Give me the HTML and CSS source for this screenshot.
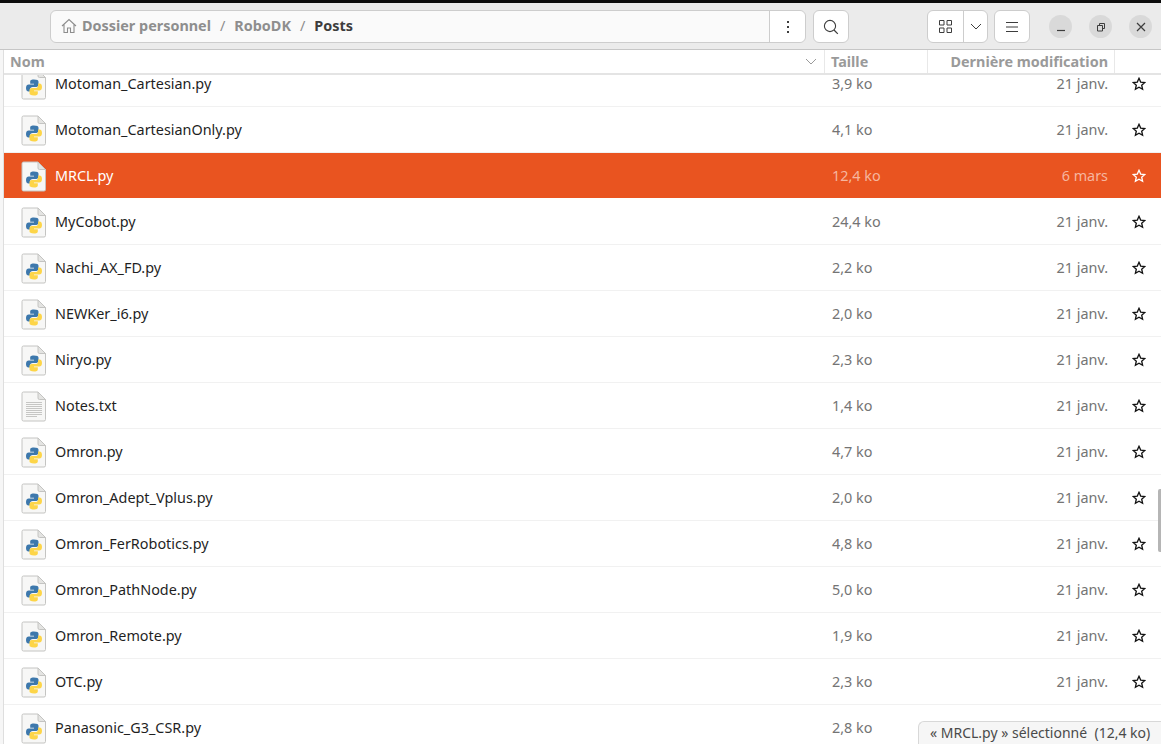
FILE: index.html
```html
<!DOCTYPE html>
<html lang="fr">
<head>
    <meta charset="UTF-8">
    <title>Posts</title>
    <link rel="stylesheet" href="styles.css">
</head>
<body>

<svg class="defs" width="0" height="0">
    <symbol id="sheet" viewBox="0 0 26 32">
        <path d="M2.500 2h14.500l7.500 7.500v20a1.500 1.500 0 0 1-1.500 1.500h-20.500a1.500 1.500 0 0 1-1.500-1.500v-26a1.500 1.500 0 0 1 1.500-1.500z" fill="#f7f7f6" stroke="#c4c4c2"/>
        <path d="M17 2v6a1.500 1.500 0 0 0 1.500 1.500h6z" fill="#e4e4e2" stroke="#c4c4c2"/>
    </symbol>
    <symbol id="py" viewBox="0 0 26 32">
        <use href="#sheet"/>
        <path d="M12.800 11.500c-3.400 0-3.600 1.300-3.600 2.200v2h3.800v.8h-5.300c-1.500 0-2.700 1.100-2.700 3.500s1.100 3.500 2.500 3.500h1.400v-1.900c0-1.500 1.200-2.700 2.800-2.700h3.600c1.200 0 2.200-1 2.200-2.200v-3c0-1.300-1.200-2.200-4.700-2.200z" fill="#3d78ac"/>
        <path d="M13.200 27.500c3.400 0 3.600-1.300 3.600-2.200v-2h-3.800v-.8h5.300c1.500 0 2.700-1.100 2.700-3.500s-1.100-3.500-2.500-3.500h-1.400v1.900c0 1.500-1.200 2.700-2.800 2.700h-3.600c-1.200 0-2.200 1-2.200 2.200v3c0 1.300 1.200 2.200 4.700 2.200z" fill="#fdd548"/>
    </symbol>
    <symbol id="txt" viewBox="0 0 26 32">
        <use href="#sheet"/>
        <path d="M5 12.500h16M5 14.500h16M5 16.500h16M5 18.500h16M5 20.500h16M5 22.500h16M5 24.500h16M5 26.500h11" stroke="#c6c6c4" fill="none"/>
    </symbol>
    <symbol id="star" viewBox="0 0 14 14">
        <path d="M7 1.300l1.700 3.800 4.100.4-3.100 2.700.9 4.100L7 10.200l-3.600 2.100.9-4.100-3.100-2.700 4.100-.4z" fill="none" stroke="currentColor" stroke-width="1.300"/>
    </symbol>
</svg>

<div class="top-edge"></div>

<header class="toolbar">
    <div class="pathbar">
        <div class="crumbs">
            <svg class="home-icon" width="16" height="16" viewBox="0 0 16 16"><path d="M1 8l7-6.500L15 8M3 6.500V14.500h3.500V10h3v4.500H13V6.500" fill="none" stroke="#8d8d8d" stroke-width="1.100"/></svg>
            <span class="crumb">Dossier personnel</span>
            <span class="sep">/</span>
            <span class="crumb">RoboDK</span>
            <span class="sep">/</span>
            <span class="crumb current">Posts</span>
        </div>
        <div class="path-menu">
            <svg width="4" height="12" viewBox="0 0 4 12"><path d="M1 0h2v2H1zM1 5h2v2H1zM1 10h2v2H1z" fill="#3d3d3d"/></svg>
        </div>
    </div>
    <button class="tool-btn search-btn">
        <svg width="16" height="16" viewBox="0 0 16 16"><circle cx="7" cy="7" r="5.600" fill="none" stroke="#3d3d3d" stroke-width="1.100"/><path d="M11 11l3.800 3.800" stroke="#3d3d3d" stroke-width="1.200"/></svg>
    </button>
    <div class="view-switch">
        <div class="view-grid">
            <svg width="13" height="13" viewBox="0 0 13 13"><path d="M.5.500h4.500v4.500H.5zM8 .500h4.500v4.500H8zM.5 8h4.500v4.500H.5zM8 8h4.500v4.500H8z" fill="none" stroke="#3d3d3d"/></svg>
        </div>
        <div class="view-drop">
            <svg width="12" height="7" viewBox="0 0 12 7"><path d="M1 1l5 5 5-5" fill="none" stroke="#3d3d3d"/></svg>
        </div>
    </div>
    <button class="tool-btn menu-btn">
        <svg width="12" height="10" viewBox="0 0 12 10"><path d="M0 .5h12M0 5h12M0 9.500h12" stroke="#3d3d3d"/></svg>
    </button>
    <div class="win-btns">
        <button class="win-btn"><svg width="10" height="10" viewBox="0 0 10 10"><path d="M1 8.500h8" stroke="#3d3d3d" stroke-width="1.200"/></svg></button>
        <button class="win-btn"><svg width="10" height="10" viewBox="0 0 10 10"><path d="M1.500 3.500h5v5.500h-5zM3.500 3.500v-2h5v5h-2" fill="none" stroke="#3d3d3d"/></svg></button>
        <button class="win-btn"><svg width="10" height="10" viewBox="0 0 10 10"><path d="M1 1l8 8M9 1l-8 8" stroke="#3d3d3d" stroke-width="1.200"/></svg></button>
    </div>
</header>

<main class="browser">
    <div class="sidebar-edge"></div>
    <section class="files">
        <div class="col-head">
            <div class="col col-name">Nom
                <svg width="12" height="7" viewBox="0 0 12 7"><path d="M1 1l5 5 5-5" fill="none" stroke="#9a9a9a"/></svg>
            </div>
            <div class="col col-size">Taille</div>
            <div class="col col-date">Dernière modification</div>
            <div class="col col-star"></div>
        </div>
        <div class="scroller">
            <div class="file-list" id="file-list"></div>
            <div class="scroll-thumb"></div>
            <div class="status">« MRCL.py » sélectionné  (12,4 ko)</div>
        </div>
    </section>
</main>

<script>
    // last row's date and star sit under the status label, so it has none
    const files = [
        ['Motoman_Cartesian.py', '3,9 ko', '21 janv.'],
        ['Motoman_CartesianOnly.py', '4,1 ko', '21 janv.'],
        ['MRCL.py', '12,4 ko', '6 mars'],
        ['MyCobot.py', '24,4 ko', '21 janv.'],
        ['Nachi_AX_FD.py', '2,2 ko', '21 janv.'],
        ['NEWKer_i6.py', '2,0 ko', '21 janv.'],
        ['Niryo.py', '2,3 ko', '21 janv.'],
        ['Notes.txt', '1,4 ko', '21 janv.'],
        ['Omron.py', '4,7 ko', '21 janv.'],
        ['Omron_Adept_Vplus.py', '2,0 ko', '21 janv.'],
        ['Omron_FerRobotics.py', '4,8 ko', '21 janv.'],
        ['Omron_PathNode.py', '5,0 ko', '21 janv.'],
        ['Omron_Remote.py', '1,9 ko', '21 janv.'],
        ['OTC.py', '2,3 ko', '21 janv.'],
        ['Panasonic_G3_CSR.py', '2,8 ko', '']
    ];

    const list = document.getElementById('file-list');
    files.forEach(file => {
        const row = document.createElement('div');
        row.classList.add('file-row');
        if (file[0] === 'MRCL.py') {
            row.classList.add('selected');
        }
        const icon = file[0].endsWith('.txt') ? 'txt' : 'py';
        row.innerHTML = `<svg class="file-icon"><use href="#${icon}"/></svg>
            <span class="file-name">${file[0]}</span>
            <span class="file-size">${file[1]}</span>
            <span class="file-date">${file[2]}</span>
            <span class="file-star"><svg width="14" height="14"><use href="#star"/></svg></span>`;
        list.appendChild(row);
    });
</script>
</body>
</html>
```

FILE: styles.css
```css
html, body {
    height: 100%;
}

body {
    margin: 0;
    height: 744px;
    overflow: hidden;
    display: flex;
    flex-direction: column;
    background-color: #fff;
    font-family: 'Noto Sans', sans-serif;
    font-size: 14.4px;
    color: #2a2a2a;
}

.defs {
    position: absolute;
}

.top-edge {
    height: 3px;
    flex: none;
    background-color: #0c0c0c;
}

.toolbar {
    height: 47px;
    flex: none;
    display: flex;
    align-items: center;
    padding: 1px 9px 0 50px;
    box-sizing: border-box;
    background-color: #ebebeb;
    border-bottom: 1px solid #c6c6c6;
}

.pathbar {
    width: 756px;
    height: 33px;
    display: flex;
    box-sizing: border-box;
    background-color: #fafafa;
    border: 1px solid #cdcdcd;
    border-radius: 6px;
}

.crumbs {
    flex: 1;
    display: flex;
    align-items: center;
    padding: 0 0 2px 10px;
    font-weight: 700;
    color: #8e8e8e;
}

.home-icon {
    margin-right: 5px;
}

.sep {
    margin: 0 9px;
    font-weight: 400;
}

.current {
    color: #3d3d3d;
}

.path-menu {
    width: 35px;
    display: flex;
    align-items: center;
    justify-content: center;
    background-color: #fff;
    border-left: 1px solid #cdcdcd;
    border-radius: 0 6px 6px 0;
}

.tool-btn, .view-switch {
    height: 33px;
    box-sizing: border-box;
    background-color: #fff;
    border: 1px solid #cdcdcd;
    border-radius: 6px;
}

.tool-btn {
    width: 36px;
    padding: 0;
    display: flex;
    align-items: center;
    justify-content: center;
}

.search-btn {
    margin-left: 7px;
}

.view-switch {
    width: 61px;
    margin-left: 78px;
    display: flex;
}

.view-grid {
    width: 35px;
    display: flex;
    align-items: center;
    justify-content: center;
    border-right: 1px solid #cdcdcd;
}

.view-drop {
    flex: 1;
    display: flex;
    align-items: center;
    justify-content: center;
}

.menu-btn {
    margin-left: 6px;
}

.win-btns {
    margin-left: 19px;
    display: flex;
    gap: 17px;
}

.win-btn {
    width: 23px;
    height: 23px;
    padding: 0;
    display: flex;
    align-items: center;
    justify-content: center;
    background-color: #d9d9d9;
    border: none;
    border-radius: 50%;
}

.browser {
    flex: 1;
    min-height: 0;
    display: flex;
}

.sidebar-edge {
    width: 3px;
    flex: none;
    background-color: #f6f6f6;
    border-right: 1px solid #dedede;
}

.files {
    flex: 1;
    min-width: 0;
    display: flex;
    flex-direction: column;
}

.col-head {
    height: 25px;
    flex: none;
    display: flex;
    box-sizing: border-box;
    font-weight: 700;
    color: #9a9a9a;
    background-color: #fff;
    border-bottom: 2px solid #e4e4e4;
}

.col {
    display: flex;
    align-items: center;
    box-sizing: border-box;
    border-right: 1px solid #e8e8e8;
}

.col-name {
    width: 821px;
    padding: 0 7px 0 6px;
    justify-content: space-between;
}

.col-size {
    width: 103px;
    padding-left: 6px;
}

.col-date {
    width: 187px;
    padding-right: 6px;
    justify-content: flex-end;
}

.col-star {
    flex: 1;
    border-right: none;
}

.scroller {
    position: relative;
    flex: 1;
    min-height: 0;
    overflow: hidden;
}

.file-list {
    margin-top: -14px;
}

.file-row {
    height: 46px;
    display: flex;
    align-items: center;
    box-sizing: border-box;
    padding-left: 17px;
    border-bottom: 1px solid #f1f1f1;
}

.file-icon {
    width: 26px;
    height: 32px;
    flex: none;
}

.file-name {
    width: 785px;
    flex: none;
    padding-left: 8px;
    box-sizing: border-box;
    color: #1f1f1f;
}

.file-size {
    width: 100px;
    flex: none;
    color: #747474;
}

.file-date {
    width: 176px;
    flex: none;
    text-align: right;
    color: #747474;
}

.file-star {
    flex: 1;
    display: flex;
    justify-content: center;
    padding-left: 8px;
    color: #111;
}

.file-row.selected {
    background-color: #e95420;
    border-bottom-color: #fff;
}

.selected .file-name {
    color: #fff;
}

.selected .file-size, .selected .file-date {
    color: #f6b69f;
}

.selected .file-star {
    color: #fff;
}

/* floats over the list */
.scroll-thumb {
    position: absolute;
    top: 414px;
    right: 0;
    width: 3px;
    height: 63px;
    background-color: #b5b5b5;
    border-radius: 2px 0 0 2px;
}

.status {
    position: absolute;
    right: 0;
    bottom: 0;
    width: 243px;
    height: 23px;
    box-sizing: border-box;
    padding-left: 11px;
    font-size: 14px;
    line-height: 22px;
    white-space: pre;
    color: #4a4a4a;
    background-color: #f6f6f6;
    border: 1px solid #d8d8d8;
    border-width: 1px 0 0 1px;
    border-radius: 6px 0 0 0;
}
```
